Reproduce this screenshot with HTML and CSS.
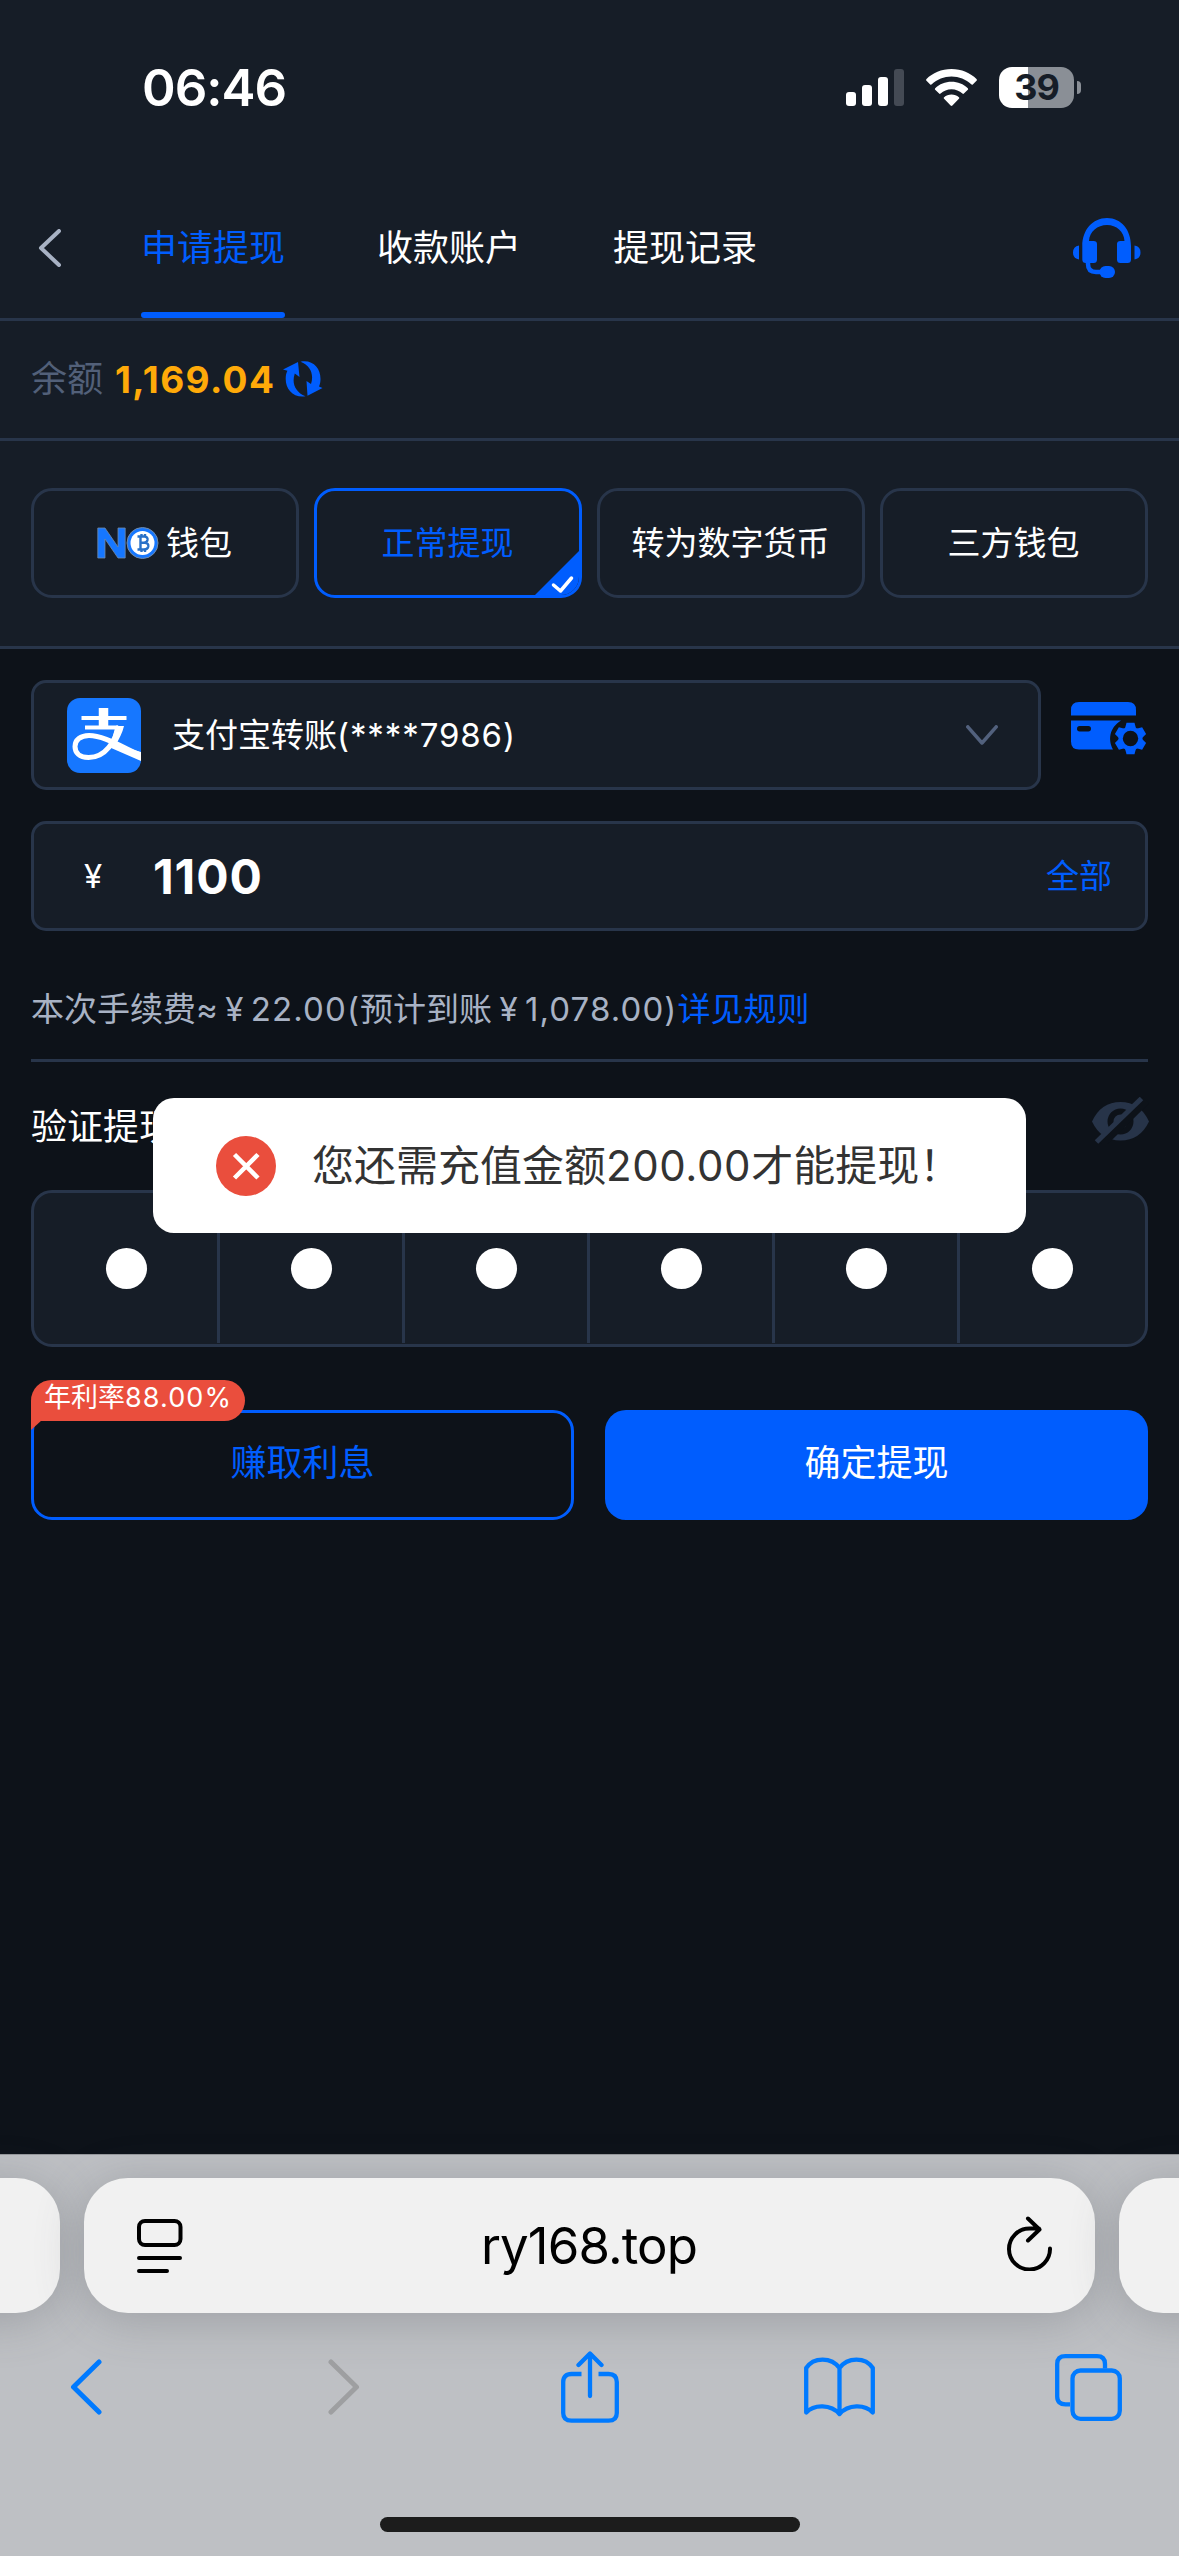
FILE: index.html
```html
<!DOCTYPE html>
<html lang="zh-CN">
<head>
<meta charset="utf-8">
<title>申请提现</title>
<link rel="stylesheet" href="styles.css">
</head>
<body>
<div class="screen">
  <div class="status">
    <span class="clock">06:46</span>
    <div class="status-icons">
      <svg class="signal" width="58" height="37" viewBox="0 0 58 37"><g fill="#fff"><rect x="0" y="23" width="10" height="14" rx="3"/><rect x="16" y="16" width="10" height="21" rx="3"/><rect x="32" y="8" width="10" height="29" rx="3"/></g><rect x="48" y="0" width="10" height="37" rx="3" fill="#444a54"/></svg>
      <svg class="wifi" width="51" height="37" viewBox="0 0 51 37"><path fill="#fff" d="M25.500 0C35.500 0 44.500 4 50.500 10Q51.300 11 50.500 11.800L46.800 15.400Q46 16 45.200 15.300C40 10.400 33 7.500 25.500 7.500S11 10.400 5.800 15.300Q5 16 4.200 15.400L.5 11.800Q-.3 11 .5 10C6.500 4 15.500 0 25.500 0ZM25.500 12.800C31.800 12.800 37.500 15.200 41.800 19.200Q42.500 20 41.800 20.800L37.900 24.600Q37.200 25.200 36.400 24.500C33.500 21.800 29.700 20.200 25.500 20.200S17.500 21.800 14.600 24.500Q13.800 25.200 13.100 24.600L9.200 20.800Q8.500 20 9.200 19.200C13.500 15.200 19.200 12.800 25.500 12.800ZM25.500 25.500C28.300 25.500 30.900 26.500 32.900 28.300Q33.600 29 32.900 29.800L26.400 36.500Q25.500 37.300 24.600 36.500L18.100 29.800Q17.400 29 18.100 28.300C20.100 26.500 22.700 25.500 25.500 25.500Z"/></svg>
      <div class="battery"><span class="battery-cell">39</span><span class="battery-nub"></span></div>
    </div>
  </div>

  <header class="header">
    <svg class="back" width="23" height="38" viewBox="0 0 23 38"><path d="M21 2L3 19L21 36" fill="none" stroke="#a8b2c4" stroke-width="4" stroke-linecap="round" stroke-linejoin="round"/></svg>
    <nav class="tabs"><span class="tab active">申请提现</span><span class="tab">收款账户</span><span class="tab">提现记录</span></nav>
    <svg class="service" width="68" height="60" viewBox="0 0 68 60"><g fill="#005dfe"><path d="M9.300 28C9.300 12 19.500 0 34 0S58 12 58 28V41.500Q58 45 54.500 45H47.500Q44 45 44 41.500V26Q44 23 47.500 23H51.500C51 13.500 43.500 7 34 7S16.500 13.500 16 23H20.500Q24 23 24 26V41.500Q24 45 20.500 45H12.800Q9.300 45 9.300 41.500Z"/><path d="M6 27.500V41.500Q0 40.500 0 34.500T6 27.500ZM61.500 27.500V41.500Q67.500 40.500 67.500 34.500T61.500 27.500Z"/><rect x="26.500" y="48" width="15.500" height="12" rx="6"/></g><path d="M15 43V46Q15 54 23 54H30" fill="none" stroke="#005dfe" stroke-width="4.500"/></svg>
  </header>

  <section class="balance">
    <span class="balance-label">余额</span><span class="balance-value">1,169.04</span>
    <svg class="refresh" width="40" height="36" viewBox="0 0 40 36"><g fill="#005dfe"><path d="M0 8.500L15 1L16.500 16L11.800 12.500C8.500 22 12 31 22.500 35.300C10 37 2.500 28 2.700 17.500C2.700 14.500 3.300 12 4.400 9.800Z"/><path d="M39.500 27L24.500 34.700L23.500 20L28 23C31 14 28 4.500 17.500 .7C30 -1.500 37.500 7 37.500 18C37.500 21 37 23 36 25.600Z"/></g></svg>
  </section>

  <section class="methods">
    <div class="method wallet"><svg class="no-logo" width="62" height="32" viewBox="0 0 62 32"><path d="M.8 31V1H8L21 20V1H28.200V31H21L8 12V31Z" fill="#1677ff" stroke="#728ba8" stroke-width=".8"/><circle cx="45.500" cy="16" r="15.500" fill="#1677ff" stroke="#728ba8"/><circle cx="45.500" cy="16" r="12" fill="#fff"/><path d="M40.500 9.500H47.500Q51 10 50.500 13Q50 15.500 47 15.800H43.500H47.800Q51.800 16.200 51.300 19.500Q50.700 22.500 47 22.500H40.500M43.500 9.500V22.500M44.500 7V9.500M48 7V9.500M44.500 22.500V25M48 22.500V25" fill="none" stroke="#2870c8" stroke-width="2.400"/></svg><span>钱包</span></div>
    <div class="method selected"><span>正常提现</span><svg class="corner" width="44" height="44" viewBox="0 0 44 44"><path d="M0 44L44 0V44Z" fill="#005dfe"/><path d="M18.500 34L25.500 40L36.500 27" fill="none" stroke="#fff" stroke-width="3.500" stroke-linecap="round" stroke-linejoin="round"/></svg></div>
    <div class="method"><span>转为数字货币</span></div>
    <div class="method"><span>三方钱包</span></div>
  </section>

  <main class="form">
    <div class="account-row">
      <div class="field account">
        <svg class="alipay" width="74" height="75" viewBox="0 0 74 75"><rect width="74" height="75" rx="13" fill="#1677ff"/><g fill="none" stroke="#fff"><path d="M36.500 10V30" stroke-width="9.500"/><path d="M14.500 20H59.500M18 29.500H51" stroke-width="4"/><path d="M52 28C48 43 39 59.500 21.500 59.500C12 59.500 8 54.500 8 48.500C8 42 13.500 37.500 22 37.500C36 37.500 53 48 76 58.500" stroke-width="5"/></g><path d="M48.500 28H57C55.500 35 52 41 49 46.500L74 54V63L43 49.500Z" fill="#fff"/></svg>
        <span class="account-name">支付宝转账<span class="num">(****7986)</span></span>
        <svg class="caret" width="32" height="20" viewBox="0 0 32 20"><path d="M1.800 1.800L16 18L30.200 1.800" fill="none" stroke="#52617d" stroke-width="3.500" stroke-linecap="round" stroke-linejoin="round"/></svg>
      </div>
      <svg class="card-gear" width="76" height="53" viewBox="0 0 76 53"><path fill="#005dfe" d="M0 13.500V8Q0 0 8 0H57Q65 0 65 8V13.500ZM0 18.500H50C38 26 37 38 42 47.500H8Q0 47.500 0 39.500Z"/><rect x="6" y="24" width="14" height="5.500" rx="2.700" fill="#0d1219"/><g transform="translate(59.500 36.500)"><g fill="#005dfe"><circle r="12"/><path d="M-5.500-10L-4-15.700H4L5.500-10Z"/><path d="M-5.500-10L-4-15.700H4L5.500-10Z" transform="rotate(60)"/><path d="M-5.500-10L-4-15.700H4L5.500-10Z" transform="rotate(120)"/><path d="M-5.500-10L-4-15.700H4L5.500-10Z" transform="rotate(180)"/><path d="M-5.500-10L-4-15.700H4L5.500-10Z" transform="rotate(240)"/><path d="M-5.500-10L-4-15.700H4L5.500-10Z" transform="rotate(300)"/></g><circle r="7.700" fill="#0d1219"/></g></svg>
    </div>
    <div class="field amount"><span class="currency">¥</span><span class="amount-value">1100</span><span class="all">全部</span></div>
    <p class="fee">本次手续费≈<span class="yen">¥</span><span class="num">22.00(</span>预计到账<span class="yen">¥</span><span class="num">1,078.00)</span><a class="rules">详见规则</a></p>
    <div class="verify"><span>验证提现密码</span><svg class="eye" width="57" height="47" viewBox="0 0 57 47"><path fill="#273449" d="M0 24.500Q9 5 28.500 5T57 24.500Q48 43.500 28.500 43.500T0 24.500Z"/><circle cx="28.500" cy="24.500" r="10" fill="#273449" stroke="#0d1219" stroke-width="6"/><path d="M9.500 47L54 3" stroke="#0d1219" stroke-width="9"/><path d="M4.500 45L49.500 1.500" stroke="#273449" stroke-width="5"/></svg></div>
    <div class="pin"><i></i><i></i><i></i><i></i><i></i><i></i></div>
    <div class="actions">
      <div class="button outline">赚取利息<span class="badge">年利率<span class="num">88.00%</span></span></div>
      <div class="button primary">确定提现</div>
    </div>
  </main>

  <footer class="browser">
    <div class="address-row">
      <div class="pill"></div>
      <div class="pill address">
        <svg width="46" height="54" viewBox="0 0 46 54" fill="none" stroke="#000" stroke-width="4" stroke-linecap="round"><rect x="2" y="2" width="41.500" height="24" rx="6"/><path d="M2 39H43M2 52H30"/></svg>
        <span class="host">ry168.top</span>
        <svg class="reload" width="46" height="55" viewBox="0 0 46 55" fill="none" stroke="#000" stroke-width="4" stroke-linecap="round" stroke-linejoin="round"><path d="M43 32.500A20.500 20.500 0 1 1 22.500 12.500H32M21 2.500L32.500 13.500L21 24.500"/></svg>
      </div>
      <div class="pill"></div>
    </div>
    <div class="toolbar">
      <svg width="32" height="56" viewBox="0 0 32 56"><path d="M29 3L3.500 28L29 53" fill="none" stroke="#007aff" stroke-width="5" stroke-linecap="round" stroke-linejoin="round"/></svg>
      <svg width="32" height="56" viewBox="0 0 32 56"><path d="M3 3L28.500 28L3 53" fill="none" stroke="#9e9fa1" stroke-width="5" stroke-linecap="round" stroke-linejoin="round"/></svg>
      <svg width="58" height="72" viewBox="0 0 58 72" fill="none" stroke="#007aff" stroke-width="4.300"><path d="M20.500 23H10.500Q2.200 23 2.200 31V62Q2.200 69.700 10.500 69.700H47.500Q55.800 69.700 55.800 62V31Q55.800 23 47.500 23H37.500"/><path d="M29 45V3M17.500 14L29 2.500L40.500 14" stroke-linecap="round" stroke-linejoin="round"/></svg>
      <svg width="71" height="60" viewBox="0 0 71 60" fill="none" stroke="#007aff" stroke-width="4.300" stroke-linejoin="round" stroke-linecap="round"><path d="M35.500 11C27.500-.3 9.500-.3 2.200 11V55.500C10 47 27 47 35.500 57C44 47 61 47 68.800 55.500V11C61.500-.3 43.500-.3 35.500 11ZM35.500 11V57"/></svg>
      <svg width="67" height="67" viewBox="0 0 67 67" fill="none" stroke="#007aff" stroke-width="4.300"><path d="M15 50.300H10.500Q2.200 50.300 2.200 42.500V10Q2.200 2.200 10.500 2.200H42Q50 2.200 50 10V14.500"/><rect x="17.500" y="16.500" width="47.300" height="48.300" rx="8"/></svg>
    </div>
    <div class="home"></div>
  </footer>

  <div class="toast"><svg width="60" height="60" viewBox="0 0 60 60"><circle cx="30" cy="30" r="30" fill="#ea4e3d"/><path d="M18.500 18.500L42 42M42 18.500L18.500 42" stroke="#fff" stroke-width="4.500"/></svg><span>您还需充值金额<span class="num">200.00</span>才能提现！</span></div>
</div>
</body>
</html>
```
FILE: styles.css
```css
* { box-sizing: border-box; }
body { margin: 0; background: #0d1219; }
svg { display: block; flex: none; }
.screen {
  position: relative;
  display: flex;
  flex-direction: column;
  width: 1179px;
  height: 2556px;
  overflow: hidden;
  background: #0d1219;
  color: #fff;
  font-family: Inter, "Noto Sans CJK SC", sans-serif;
  font-size: 33px;
  line-height: 1;
}
.num { letter-spacing: .9px; }

/* status bar */
.status {
  display: flex;
  justify-content: space-between;
  height: 177px;
  padding: 0 98px 0 142px;
  background: #161d27;
}
.clock { margin-top: 62px; font-size: 51px; font-weight: 600; letter-spacing: -1px; }
.status-icons { display: flex; margin-top: 67px; }
.signal, .wifi { margin-top: 2px; }
.wifi { margin-left: 22px; }
.battery { display: flex; align-items: center; gap: 3px; margin-left: 22px; height: 41px; }
.battery-cell {
  width: 75px;
  height: 41px;
  border-radius: 13px;
  background: linear-gradient(to right, #fff 29px, #8a8f96 29px);
  color: #161d27;
  font-size: 36px;
  font-weight: 700;
  letter-spacing: -1px;
  line-height: 41px;
  text-align: center;
}
.battery-nub { width: 4px; height: 13px; border-radius: 0 6px 6px 0; background: #8a8f96; }

/* page header */
.header {
  display: flex;
  align-items: center;
  height: 144px;
  padding: 0 38px 0 38px;
  border-bottom: 3px solid #28354a;
  background: #161d27;
}
.tabs { display: flex; flex: 1; gap: 92px; align-self: stretch; margin-left: 80px; }
.tab { height: 141px; font-size: 36px; line-height: 142px; }
.tab.active { position: relative; color: #005dfe; }
.tab.active::after { content: ""; position: absolute; left: 0; right: 0; bottom: 0; height: 6px; border-radius: 3px; background: #005dfe; }

.balance {
  display: flex;
  align-items: center;
  height: 120px;
  padding: 0 0 1px 31px;
  border-bottom: 3px solid #28354a;
  background: #161d27;
  font-size: 36px;
}
.balance-label { color: #526079; }
.balance-value { margin-left: 12px; color: #ffaa09; font-size: 37px; font-weight: 700; letter-spacing: 1.4px; }
.refresh { margin-left: 8px; }

.methods {
  display: grid;
  grid-template-columns: repeat(4, 268px);
  gap: 15px;
  height: 208px;
  padding: 47px 31px 0;
  border-bottom: 3px solid #28354a;
  background: #161d27;
}
.method {
  position: relative;
  display: flex;
  align-items: center;
  justify-content: center;
  gap: 8px;
  height: 110px;
  padding-right: 1px;
  border: 3px solid #28354a;
  border-radius: 21px;
  overflow: hidden;
}
.wallet { gap: 7px; }
.method.selected { border-color: #005dfe; color: #005dfe; }
.corner { position: absolute; right: 0; bottom: 0; }

/* withdraw form */
.form { flex: 1; padding: 31px 31px 0; }
.account-row { display: flex; gap: 30px; }
.field {
  display: flex;
  align-items: center;
  height: 110px;
  border: 3px solid #28354a;
  border-radius: 15px;
  background: #161d27;
}
.account { width: 1010px; padding: 0 40px 0 33px; }
.account-name { flex: 1; margin-left: 31px; }
.card-gear { margin-top: 22px; }
.amount { margin-top: 31px; padding: 0 33px 0 50px; }
.currency { width: 69px; }
.amount-value { flex: 1; padding-top: 2px; font-size: 48px; font-weight: 700; letter-spacing: .9px; }
.all, .rules { color: #005dfe; }
.fee {
  height: 131px;
  margin: 0;
  border-bottom: 3px solid #28354a;
  color: #a8b2c4;
  line-height: 157px;
  white-space: nowrap;
}
.fee .num { letter-spacing: 1.1px; }
.yen { display: inline-block; width: 33px; text-align: center; }
.verify { display: flex; justify-content: space-between; height: 128px; font-size: 36px; line-height: 130px; }
.eye { margin: 35px -1px 0 0; }
.pin {
  display: grid;
  grid-template-columns: repeat(6, 1fr);
  height: 157px;
  padding: 0 0 1px 1px;
  border: 3px solid #28354a;
  border-radius: 21px;
  background: #161d27;
}
.pin i { display: grid; place-items: center; border-right: 3px solid #28354a; }
.pin i:last-child { border-right: 0; }
.pin i::before { content: ""; width: 41px; height: 41px; border-radius: 50%; background: #fff; }
.actions { display: grid; grid-template-columns: 1fr 1fr; gap: 31px; margin-top: 63px; }
.button { position: relative; height: 110px; border-radius: 21px; font-size: 36px; line-height: 101px; text-align: center; }
.outline { border: 3px solid #005dfe; color: #005dfe; }
.primary { background: #005dfe; line-height: 106px; }
.badge {
  position: absolute;
  left: -3px;
  top: -33px;
  width: 214px;
  height: 41px;
  border-radius: 21px 21px 21px 0;
  background: #ea4e3d;
  color: #fff;
  font-size: 27px;
  line-height: 36px;
}
.badge .num { letter-spacing: 1.1px; }
.badge::after { content: ""; position: absolute; left: 0; top: 40px; border-top: 10px solid #ea4e3d; border-right: 11px solid transparent; }

.toast {
  position: absolute;
  left: 153px;
  top: 1098px;
  display: flex;
  align-items: center;
  gap: 36px;
  width: 873px;
  height: 135px;
  padding-left: 63px;
  border-radius: 21px;
  background: #fff;
  color: #333;
  font-size: 42px;
  line-height: 44px;
  white-space: nowrap;
}
.toast .num { letter-spacing: .6px; }

/* browser bar */
.browser { height: 402px; border-top: 1px solid #96989c; background: #bec0c4; }
.address-row { display: grid; grid-template-columns: 1011px 1011px 1011px; gap: 24px; margin: 23px 0 0 -951px; }
.pill { height: 135px; border-radius: 44px; background: #f1f1f1; box-shadow: 0 6px 48px rgba(80, 84, 88, .3); }
.address { display: flex; align-items: center; justify-content: space-between; padding: 0 42px 0 53px; color: #000; }
.host { margin-right: 12px; font-size: 51px; letter-spacing: -.9px; }
.reload { margin-bottom: 5px; }
.toolbar { display: flex; align-items: center; height: 72px; margin-top: 38px; padding-left: 70px; }
.toolbar svg:nth-child(1) { margin-right: 226px; }
.toolbar svg:nth-child(2) { margin-right: 201px; }
.toolbar svg:nth-child(3) { margin-right: 185px; }
.toolbar svg:nth-child(4) { margin-right: 180px; }
.home { width: 420px; height: 15px; margin: 94px auto 0; border-radius: 8px; background: #1c1c1c; }
```
